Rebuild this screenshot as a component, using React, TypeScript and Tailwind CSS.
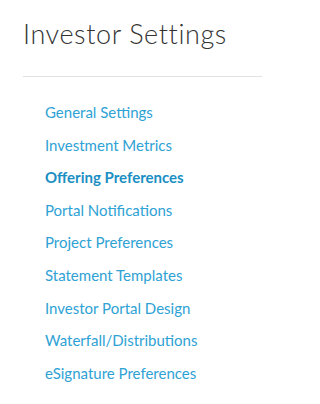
const items = [
  "General Settings",
  "Investment Metrics",
  "Offering Preferences",
  "Portal Notifications",
  "Project Preferences",
  "Statement Templates",
  "Investor Portal Design",
  "Waterfall/Distributions",
  "eSignature Preferences",
];

export default function App() {
  return (
    <div className="min-h-[404px] w-[262px] bg-white font-['Lato',sans-serif]">
      <div className="pl-[23px] pt-[16px]">
        <h1 className="text-[27px] leading-[36px] font-light tracking-[0.6px] text-[#333333]">Investor Settings</h1>
        <div className="mt-[24px] h-px bg-[#e2e2e2]" />
        <ul className="mt-[19px] pl-[22px]">
          {items.map((item) => (
            <li key={item} className="leading-[32.6px]">
              <a
                href="#"
                className={
                  item === "Offering Preferences"
                    ? "text-[15px] font-bold text-[#1b8fc3]"
                    : "text-[15px] text-[#2ea2d4]"
                }
              >
                {item}
              </a>
            </li>
          ))}
        </ul>
      </div>
    </div>
  );
}
